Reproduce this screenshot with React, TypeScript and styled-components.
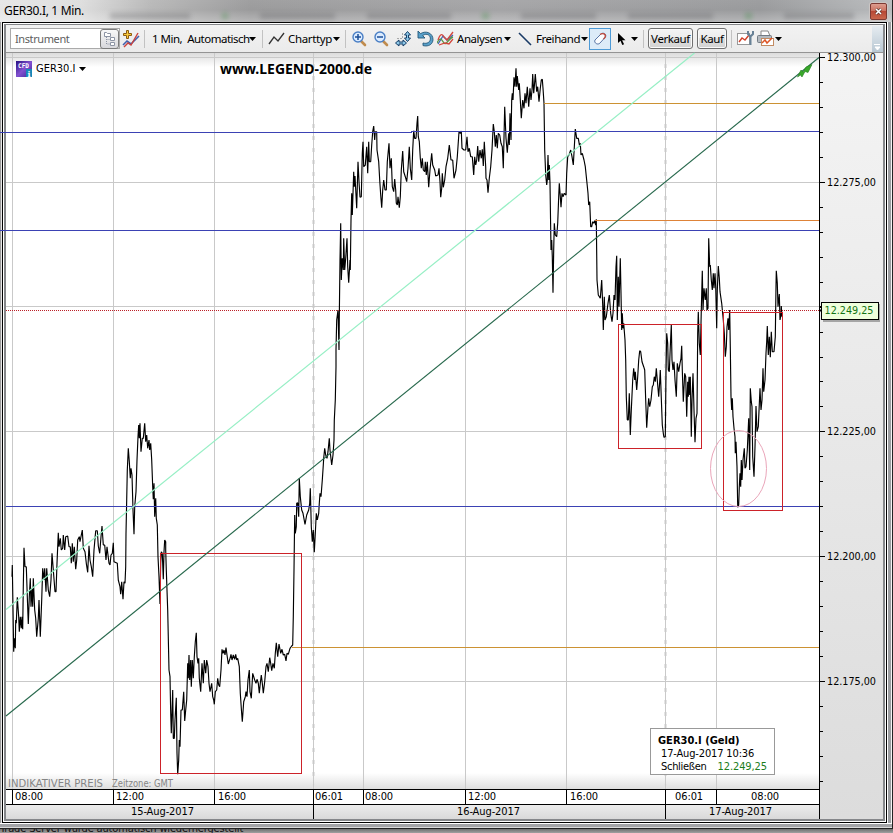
import React from "react";
import styled, { createGlobalStyle } from "styled-components";

const GlobalStyle = createGlobalStyle`
  html, body { margin: 0; padding: 0; overflow: hidden; }
  * { box-sizing: border-box; }
`;

const UI = `"Noto Sans", "Open Sans", sans-serif`;
const TAHOMA = `"DejaVu Sans Condensed", "DejaVu Sans", sans-serif`;

const Desktop = styled.div`
  width: 893px;
  height: 833px;
  overflow: hidden;
  display: flex;
  flex-direction: column;
  background: #a9a9ab;
  font-family: ${UI};
  color: #000;
`;

const WindowShell = styled.div`
  height: 828px;
  flex: none;
  display: flex;
  flex-direction: column;
  border-right: 1px solid #222;
  background: linear-gradient(to right, #9b9b9b 0 1px, #e8e8e8 1px 2px, #fff 2px 888px, #9c9ea1 888px 891px, #f4f4f4 891px);
`;

const TitleBar = styled.header`
  height: 22px;
  flex: none;
  display: flex;
  align-items: center;
  justify-content: space-between;
  padding: 0 5px 0 4px;
  background: linear-gradient(to bottom, rgba(255, 255, 255, 0.05), rgba(255, 255, 255, 0) 45%, rgba(255, 255, 255, 0.28)),
    linear-gradient(to right, #e6e6e6 0, #dedede 80px, #b8b8b8 150px, #9b9b9c 250px, #a4a4a6 500px, #999a9c 760px, #b9bbbd 893px);
`;

const Title = styled.h1`
  margin: 0;
  font: 400 12px/20px ${UI};
  letter-spacing: -0.32px;
  width: 90px;
  white-space: nowrap;
`;

const Reflections = styled.div`
  flex: 1;
  height: 22px;
  display: flex;
  align-items: center;
  justify-content: space-around;
  filter: blur(2.5px);
  opacity: 0.32;
  padding-top: 9px;
`;

const Smudge = styled.i<{ $w: number; $green?: boolean }>`
  width: ${(p) => p.$w}px;
  height: 6px;
  background: ${(p) => (p.$green ? "#2f8a35" : "#5b5b5f")};
`;

const CloseButton = styled.button`
  width: 17px;
  height: 17px;
  padding: 0;
  margin-top: 1px;
  display: flex;
  align-items: center;
  justify-content: center;
  border: 1px solid #7e3a33;
  border-radius: 2px;
  box-shadow: 0 0 0 1px #ccc6c4;
  background: linear-gradient(#dd9d8f, #cb6e5c 48%, #b74835 50%, #c9664c);
`;

const Frame = styled.div`
  width: 885px;
  height: 801px;
  flex: none;
  margin-left: 2px;
  padding: 1px;
  border: 1px solid #000;
  background: #fff;
`;

const InnerFrame = styled.main`
  height: 797px;
  border: 2px solid #85878a;
  border-top-width: 1px;
  display: flex;
  flex-direction: column;
`;

const FrameBottom = styled.div`
  height: 5px;
  flex: none;
  background: linear-gradient(#fff 0 1px, #a3a4a7 1px 4px, #d9d9d9 4px);
`;

const Toolbar = styled.div`
  height: 28px;
  flex: none;
  display: flex;
  align-items: center;
  padding-left: 4px;
  border-bottom: 1px solid #949494;
  background: linear-gradient(#f2f2f2, #ebebeb);
  font: 400 11.5px/20px ${UI};
`;

const Slot = styled.div<{ $gap?: number; $w: number; $ls?: number }>`
  flex: none;
  margin-left: ${(p) => p.$gap ?? 0}px;
  width: ${(p) => p.$w}px;
  height: 21px;
  display: flex;
  align-items: center;
  white-space: nowrap;
  letter-spacing: ${(p) => p.$ls ?? 0}px;
  svg { flex: none; display: block; }
`;

const Separator = styled.div<{ $gap: number }>`
  flex: none;
  width: 1px;
  height: 18px;
  margin-left: ${(p) => p.$gap}px;
  background: #c2c2c2;
`;

const InstrumentField = styled.div`
  width: 110px;
  height: 21px;
  flex: none;
  display: flex;
  justify-content: space-between;
  align-items: center;
  padding-left: 4px;
  border: 1px solid #aaa;
  background: #fff;
  font: 400 11px/18px ${UI};
  letter-spacing: -0.4px;
  color: #606060;
`;

const PickerButton = styled.span`
  width: 19px;
  height: 20px;
  border: 1px solid #7b7b7b;
  border-radius: 3px;
  background: linear-gradient(#f8f8f8, #d8d8dc);
  display: flex;
  align-items: center;
  justify-content: center;
`;

const ActiveTool = styled.div`
  flex: none;
  width: 22px;
  height: 22px;
  margin-left: 1px;
  border: 1px solid #4d9ad6;
  background: #dcebf8;
  display: flex;
  align-items: center;
  justify-content: center;
`;

const OrderButton = styled.button<{ $w: number; $gap: number }>`
  flex: none;
  width: ${(p) => p.$w}px;
  height: 21px;
  margin: 0 0 0 ${(p) => p.$gap}px;
  padding: 0;
  border: 1px solid #707070;
  border-radius: 3px;
  box-shadow: inset 0 0 0 1px #fafafa;
  background: linear-gradient(#f4f4f4, #ececec 48%, #dedede 50%, #d2d2d2);
  font: 400 11.5px/18px ${UI};
  letter-spacing: -0.4px;
  color: #000;
`;

const Overflow = styled.div`
  width: 11px;
  height: 26px;
  margin-left: auto;
  background: linear-gradient(#e6ecf1, #b9c8d3);
  display: flex;
  align-items: flex-end;
  justify-content: center;
`;

const Body = styled.div`
  flex: 1;
  display: flex;
`;

const PlotColumn = styled.div`
  width: 813px;
  display: flex;
  flex-direction: column;
`;

const Plot = styled.div`
  height: 736px;
  position: relative;
  background: linear-gradient(#dcdcdc, #fff 14px, #fff 720px, #dedede 736px);
  svg { display: block; }
`;

const ChartSvg = styled.svg`
  overflow: visible;
`;

const SymbolTag = styled.div`
  position: absolute;
  left: 10px;
  top: 8px;
  height: 16px;
  display: flex;
  align-items: center;
  gap: 4px;
  font: 400 11px/16px ${TAHOMA};
`;

const Tooltip = styled.div`
  position: absolute;
  left: 644px;
  top: 675px;
  width: 125px;
  height: 47px;
  padding: 5px 0 0 7px;
  border: 1px solid #999;
  background: #fff;
  font: 400 11px/13px ${TAHOMA};
  white-space: nowrap;
`;

const TipTitle = styled.div`
  font-weight: 700;
  letter-spacing: 0;
`;

const TipRow = styled.div<{ $ls?: number }>`
  padding-left: 3px;
  display: flex;
  gap: 11px;
  letter-spacing: ${(p) => p.$ls ?? -0.15}px;
`;

const Green = styled.span`
  color: #1c7d1c;
  letter-spacing: -0.1px;
`;

const TimeRow = styled.div`
  height: 15px;
  display: grid;
  grid-template-columns: 6px 101px 101px 99px 50px 102px 101px 99px 51px 103px;
  border-top: 1px solid #000;
  background: #fff;
`;

const TimeCell = styled.div<{ $pad: number }>`
  border-left: 1px solid #000;
  padding-left: ${(p) => p.$pad}px;
  font: 400 11px/14px ${TAHOMA};
  letter-spacing: -0.1px;
  white-space: nowrap;
`;

const DateRow = styled(TimeRow)`
  grid-template-columns: 307px 352px 154px;
  background: linear-gradient(#ececec, #d9d9d9);
`;

const DateCell = styled.div<{ $pad: number; $first?: boolean }>`
  border-left: ${(p) => (p.$first ? 0 : 1)}px solid #000;
  padding-left: ${(p) => p.$pad}px;
  font: 400 11px/14px ${TAHOMA};
  letter-spacing: -0.1px;
`;

const PriceAxis = styled.aside`
  width: 64px;
  border-left: 1px solid #000;
  background: linear-gradient(#f4f4f4, #dcdcdc);
  svg { display: block; overflow: visible; }
`;

const BackgroundWindow = styled.footer`
  height: 5px;
  border-top: 1px solid #222;
  background: linear-gradient(#6f6f6f, #a0a0a0);
  overflow: hidden;
  font: 400 11px/14px ${TAHOMA};
  color: #111;
  white-space: nowrap;
  div { margin-top: -7px; letter-spacing: -0.15px; }
`;

/* Each section holds x,y pairs in thirds of a pixel, measured from its own origin. */
const sections: { origin: [number, number]; data: string }[] = [
  {
    origin: [0, 400],
    data: `36,530 37,495 41,755 43,715 46,745 47,660 49,670 52,592 56,650 58,695 61,650 64,685 66,650 68,688 70,560 72,443 75,500 79,500 82,590 85,672 88,590 91,535 93,620 96,565 98,620 100,535 104,630 107,655 110,710 115,655 117,600 121,710 125,600 128,505 132,540 134,505 138,575 140,505 145,570 149,590 153,540 156,460 160,510 165,575 168,575 171,490 175,398 177,440 181,415 184,450 188,445 190,405 194,450 197,410 203,408 207,440 211,440 214,490 217,430 220,485 223,440 227,508 230,480 233,420 238,410 240,425 247,390 250,445 255,455 259,490 263,517 267,437 270,480 274,500 278,530 282,450 287,392 292,392 295,438 299,460 303,410 306,378 310,435 314,435 318,480 321,440 327,490 330,495 333,465 337,460 340,428 342,485 352,490 355,540 360,560 362,583 365,545 369,598 372,545 375,550 377,500 378,400 380,300 382,210 385,145 388,185 391,235 393,205 396,225 399,330 402,403 404,320 408,275 411,180 414,110 416,75 418,115 420,70 423,155 427,115 430,115 434,70 437,125 440,105 443,145 447,120 449,150 452,130 455,180 458,260 460,298 462,250 464,350 467,295 469,355 472,375 474,470 477,530 480,612 482,490 484,455 487,460 490,538 492,455 494,420 497,425`,
  },
  {
    origin: [120, 520],
    data: `137,90 139,150 143,270 147,450 150,470 152,580 154,640 158,510 160,655 163,655 165,600 169,533 171,700 173,763 176,720 178,660 180,680 183,570 187,570 191,515 194,603 197,570 200,540 203,430 205,475 207,405 209,480 212,420 214,500 217,420 220,475 223,410 226,365 229,338 231,410 234,430 236,415 238,475 242,515 246,430 250,490 253,420 257,460 260,420 264,440 267,490 270,515 275,490 278,530 281,540 283,553 286,515 290,510 293,475 296,495 299,500 303,450 306,388 309,400 312,390 315,405 318,383 321,405 325,432 330,415 333,403 336,420 340,405 344,418 347,403 350,420 353,415 358,440 361,520 364,565 367,605 371,545 376,530 378,515 381,530 384,480 388,450 390,515 394,535 398,460 404,480 408,490 411,478 415,490 418,520 421,490 424,465 427,490 430,520 434,485 438,440 441,430 445,455 449,413 452,430 455,452 459,430 463,445 466,400 469,368 473,410 477,372 482,400 486,388 490,405 494,403 498,423 501,400 505,403 510,385 515,378 518,375 520,290 522,150`,
  },
  {
    origin: [280, 340],
    data: `44,525 46,580 49,560 50,490 53,488 56,530 58,415 61,470 65,510 69,520 75,553 80,525 86,510 89,490 91,445 94,560 97,605 100,570 103,637 106,580 109,520 112,540 116,520 118,490 120,460 123,470 127,420 130,375 131,355 134,325 137,345 141,355 144,335 148,295 150,330 155,375 159,345 162,300 163,240 166,180 168,80`,
  },
  {
    origin: [280, 100],
    data: `168,750 170,660 174,630 177,750 178,650 180,480 182,370 184,540 187,475 190,510 191,415 194,510 197,475 201,415 203,500 206,548 210,480 211,510 213,360 215,280 217,345 221,215 223,260 225,228 230,325 234,185 237,245 240,292 244,290 247,160 249,125 251,200 256,195 260,140 263,220 266,125 268,185 272,185 275,135 278,95 281,78 284,120 286,95 290,95 291,150 296,185 299,240 302,285 305,323 308,270 311,240 315,270 319,270 322,185 327,130 330,205 334,175 337,260 341,275 344,237 347,270 349,310 352,315 354,290 358,323 361,290 364,210 368,153 371,215 376,230 380,245 384,205 388,140 391,205 395,240 398,150 401,92 404,115 408,115 411,70 413,48 415,110 418,125 421,175 424,205 427,175 430,210 434,215 436,185 439,225 442,185 446,262 450,210 455,160 458,195 464,210 467,228 474,225 477,205 480,245 482,292 485,265 487,220 490,262 494,240 498,200 503,175 508,135 513,180 518,180 522,235 528,210 532,170 537,95 541,100 544,93 546,145 552,150`,
  },
  {
    origin: [440, 50],
    data: `77,300 81,260 84,305 88,295 92,320 97,320 101,375 104,320 107,345 110,330 113,288 116,335 120,300 124,325 127,298 130,348 133,275 137,350 138,385 141,390 144,428 148,385 152,350 156,300 160,222 163,245 166,290 169,255 172,295 175,250 179,255 183,280 187,290 190,355 194,170 198,265 202,308 206,250 208,285 210,190 213,270 215,150 217,130 219,150 222,82 225,110 228,55 230,110 232,78 236,120 238,100 241,150 244,205 248,150 252,175 255,130 258,160 262,110 266,170 270,115 273,150 276,120 278,72 281,130 283,110 286,72 290,125 293,110 297,155 301,115 304,90 307,88 309,115 312,160 314,300 317,375 320,405 322,390 324,315 326,390 328,345 330,400 332,540 333,600 335,570 337,620 339,728 341,600 343,520 346,555 350,560 353,520 356,440 358,400 361,440 363,472 366,430 369,440 373,430 378,435 380,370 383,320 387,315 392,300 396,320 400,345 404,270 406,237 410,265 415,265 419,290 421,280 423,315 427,310 432,330 436,350 441,400 444,430 446,465 449,455 452,530 455,530 458,515 461,520 464,512 467,525 469,508 471,690 475,735 481,745 485,690 488,765 490,840 493,740 495,810 499,800 504,760 508,735 512,790 516,815 519,790 522,735 525,750 528,650 530,617 532,810 535,680 537,770 541,625 543,730 545,840 547,790 549,835 551,820`,
  },
  {
    origin: [580, 200],
    data: `135,420 137,480 139,590 142,660 145,660 148,580 151,705 154,630 158,540 161,505 164,540 166,515 170,570 173,530 176,480 179,452 182,455 186,485 191,500 194,510 197,600 200,683 204,620 206,595 209,620 213,600 217,560 220,555 223,530 226,545 229,505 233,555 236,590 239,545 241,510 244,595 247,675 250,700 252,712 256,710 258,520 260,400 263,430 265,510 268,515 271,440 274,375 276,480 279,510 282,485 285,540 289,590 292,490 296,515 300,490 303,475 305,437 307,510 310,605 314,520 317,530 320,650 323,545 325,590 327,530 329,585 331,530 334,710 336,600 339,520 342,630 345,727 348,655 351,640 353,400 355,335 358,430 361,465 364,330 367,212 369,330 372,265 376,300 379,265 381,330 384,325 386,115 389,200 391,195 394,240 397,270 400,220 402,265 405,220 407,260 410,385 412,270 415,198 418,235 420,275 425,310`,
  },
  {
    origin: [680, 220],
    data: `130,300 133,340 136,410 139,380 141,320 144,295 146,330 149,270 151,380 153,530 155,570 157,535 159,590 162,625 165,650 166,700 168,665 171,740 173,862 176,855 178,800 180,760 182,800 184,720 186,780 189,720 193,685 195,745 198,740 202,690 206,595 209,750 211,505 214,545 216,560 218,710 222,770 225,680 228,558 231,635 235,620 240,505 243,570 246,540 249,445 251,515 255,480 258,400 260,365 262,318 265,405 268,350 271,412 274,335 277,395 282,395 286,350 288,200 289,152 292,190 294,260 298,222 300,300 303,285 304,258 306,290`,
  },
];

const pricePoints = sections
  .flatMap(({ origin, data }) =>
    data.split(/\s+/).map((pair) => {
      const [x, y] = pair.split(",").map(Number);
      return `${(origin[0] + x / 3).toFixed(1)},${(origin[1] + y / 3).toFixed(1)}`;
    })
  )
  .join(" ");

const gridX = [12, 113, 214, 313, 363, 465, 566, 665, 716];
const gridY = [57, 182, 306, 431, 556, 681];

const Caret = () => (
  <svg width="7" height="4" viewBox="0 0 7 4">
    <path d="M0 0h7L3.5 4z" fill="#000" />
  </svg>
);

const PlusChartIcon = () => (
  <svg width="18" height="18" viewBox="0 0 18 18" fill="none">
    <path d="M1 15l4-4 4 3 8-8" stroke="#4260ad" strokeWidth="1.6" />
    <path d="M2 17l4-4 3 2 7-12" stroke="#c9413d" strokeWidth="1.4" />
    <path d="M4.500 .5h2v3h3v2h-3v3h-2v-3h-3v-2h3z" fill="#f8c93c" stroke="#8c5a10" />
  </svg>
);

const LineTypeIcon = () => (
  <svg width="17" height="16" viewBox="0 0 17 16" fill="none">
    <path d="M1 13l5-7 4 4 6-8" stroke="#333" strokeWidth="1.3" />
  </svg>
);

const MagnifierIcon = ({ plus = false }: { plus?: boolean }) => (
  <svg width="15" height="16" viewBox="0 0 15 16" fill="none">
    <path d="M9 10l4 4" stroke="#c08c4e" strokeWidth="2.6" strokeLinecap="round" />
    <circle cx="6" cy="6" r="5" fill="#dcecff" stroke="#4a7fc5" strokeWidth="1.4" />
    <path d={plus ? "M3 6h6M6 3v6" : "M3 6h6"} stroke="#1d4f98" strokeWidth="1.5" />
  </svg>
);

const FitIcon = () => (
  <svg width="17" height="16" viewBox="0 0 17 16">
    <path d="M7.500 2v5.500H1" fill="none" stroke="#aaa" strokeDasharray="2 1" />
    <path d="M12.500 .5l3 3.500h-2v3h2l-3 3.500-3-3.500h2V4h-2z" fill="#8ec8e8" stroke="#153f68" />
    <path d="M.5 12l3.500-3v2h4V9l3.500 3-3.500 3v-2H4v2z" fill="#8ec8e8" stroke="#153f68" />
  </svg>
);

const UndoIcon = () => (
  <svg width="17" height="17" viewBox="0 0 17 17">
    <path d="M1 1v7h7L5.600 5.600C10 2.500 14 5.500 13.300 9.500c-.5 3-3.500 4.500-7.300 3.500v2.600c6 1.400 9.800-1.600 10-6C16 3 9 .2 3.600 3.600z" fill="#58a0ca" stroke="#255878" strokeWidth=".9" />
  </svg>
);

const AnalysisIcon = () => (
  <svg width="17" height="16" viewBox="0 0 17 16" fill="none" strokeWidth="1.3">
    <path d="M1 13l5-8 4 4 6-5" stroke="#3f62b4" />
    <path d="M0 12c3-7 5-3 7 0s5-5 9-6" stroke="#579947" />
    <path d="M1 9c2-6 4-7 6-3l3 3 6-8M2 14l6-2 4 1 4-5" stroke="#d4473d" />
  </svg>
);

const FreehandIcon = () => (
  <svg width="14" height="16" viewBox="0 0 14 16">
    <path d="M1 2l12 12" stroke="#193a66" strokeWidth="1.6" />
  </svg>
);

const EraserIcon = () => (
  <svg width="14" height="14" viewBox="0 0 14 14">
    <path d="M2 8l6-6c2-2 6 0 4.500 3L7 11c-2 2.500-6.500 0-5-3z" fill="#fafcff" stroke="#5875a5" />
    <path d="M7 2.500C9.500.5 13.500 2 12 5.500L10.500 7" fill="none" stroke="#c04b3e" strokeWidth="1.3" />
  </svg>
);

const PointerIcon = () => (
  <svg width="9" height="14" viewBox="0 0 9 14">
    <path d="M1 1v10l2.500-2.300L5.300 13l1.800-.8-2-4H8.500z" fill="#000" />
  </svg>
);

const ChartSetupIcon = () => (
  <svg width="17" height="17" viewBox="0 0 17 17" fill="none">
    <rect x=".5" y="3.500" width="12" height="11" fill="#fff" stroke="#999" />
    <path d="M2 12l3-4 3 2 4-5" stroke="#d3422a" strokeWidth="1.4" />
    <path d="M13.500 6v9M11 1v3l2 2h1l2-2V1" stroke="#688196" strokeWidth="2" />
  </svg>
);

const PrintIcon = () => (
  <svg width="17" height="17" viewBox="0 0 17 17" fill="none">
    <path d="M4 6V1h7l2 5" fill="#fff" stroke="#888" />
    <rect x=".5" y="5.500" width="14" height="7" rx="1" fill="#b4bac0" stroke="#737b83" />
    <rect x="4.500" y="8.500" width="12" height="7" fill="#fff" stroke="#c28b62" />
    <path d="M5 13l3-3 2 3 5-5" stroke="#de5525" strokeWidth="1.500" />
  </svg>
);

const CfdBadge = () => (
  <svg width="16" height="16" viewBox="0 0 16 16">
    <defs>
      <linearGradient id="cfd" x1="0" y1="0" x2="1" y2="1">
        <stop offset="0" stopColor="#271081" />
        <stop offset=".5" stopColor="#8251d0" />
        <stop offset="1" stopColor="#3c2398" />
      </linearGradient>
    </defs>
    <rect width="16" height="16" fill="url(#cfd)" />
    <text x="2" y="7" fontFamily="DejaVu Sans Mono, monospace" fontWeight="700" fontSize="6.500" fill="#fff" textLength="11" lengthAdjust="spacingAndGlyphs">CFD</text>
    <rect x="10" y="8" width="6" height="8" fill="#1788b8" />
    <text x="11.500" y="15.500" fontFamily="DejaVu Serif, serif" fontWeight="700" fontSize="8" fill="#fff">i</text>
  </svg>
);

const Chart = () => (
  <ChartSvg width="813" height="736" viewBox="6 53 813 736">
    <g stroke="#c9c9c9" shapeRendering="crispEdges">
      <path d="M313.500 64V789M665.500 64V789" stroke="#e4e4e4" strokeWidth="3" strokeDasharray="4 8" />
      {gridX.map((x) => <path key={x} d={`M${x + 0.5} 53V789`} />)}
      {gridY.map((y) => <path key={y} d={`M6 ${y + 0.5}H819`} />)}
    </g>
    <text x="8" y="787" fontFamily={TAHOMA} fontSize="10" fill="#858585" textLength="95" lengthAdjust="spacingAndGlyphs">INDIKATIVER PREIS</text>
    <text x="112" y="787" fontFamily={TAHOMA} fontSize="10" fill="#858585" textLength="61" lengthAdjust="spacingAndGlyphs">Zeitzone: GMT</text>
    <text x="220" y="74" fontFamily={UI} fontSize="13.500" fontWeight="700" textLength="152" lengthAdjust="spacingAndGlyphs">www.LEGEND-2000.de</text>
    <polyline points={pricePoints} fill="none" stroke="#000" strokeWidth="1.150" strokeLinejoin="bevel" />
    <g fill="none" shapeRendering="crispEdges">
      <path d="M0 132.500H412M411 131.500H819M0 230.500H819M6 506.500H819" stroke="#3b42b4" />
      <path d="M544 103.500H819M292 647.500H819" stroke="#cc9233" />
      <path d="M595 220.500H819" stroke="#de8338" />
      <path d="M6 310.500H819" stroke="#bb2028" strokeDasharray="1 1" />
      <path d="M160.500 553.500H301.500V773.500H160.500zM618.500 324.500H701.500V448.500H618.500zM723.500 312.500H782.500V510.500H723.500z" stroke="#cc2229" />
    </g>
    <path d="M6 609.500L694.500 53" stroke="#97efc5" strokeWidth="1.200" />
    <path d="M6 716L819 57.500" stroke="#28694d" strokeWidth="1.100" />
    <ellipse cx="738.500" cy="468.500" rx="28" ry="38" fill="none" stroke="#eaa6ba" />
    <path d="M797.500 77l3.500-7 2 2 3-5 6-2.500-4 8-3-1-3 5.500-1.500-2z" fill="#39a829" stroke="#247d20" strokeWidth=".6" />
  </ChartSvg>
);

const minorTicks = Array.from({ length: 30 }, (_, i) => Math.round(57 + i * 24.960)).filter((y) => y < 789);
const priceLabels = ["12.300,00", "12.275,00", "", "12.225,00", "12.200,00", "12.175,00"];

const PriceScale = () => (
  <svg width="63" height="766" viewBox="820 53 63 766" fontFamily={TAHOMA} fontSize="11">
    <g stroke="#000" shapeRendering="crispEdges">
      {minorTicks.map((y) => <path key={y} d={`M820 ${y + 0.5}h3`} />)}
      {gridY.map((y) => <path key={y} d={`M820 ${y + 0.5}h5`} />)}
    </g>
    {priceLabels.map((label, i) =>
      label ? <text key={label} x="827" y={gridY[i] + 4} textLength="49" lengthAdjust="spacingAndGlyphs">{label}</text> : null
    )}
    <rect x="823" y="304" width="57" height="18" fill="#777" opacity=".6" />
    <rect x="821.500" y="302.500" width="57" height="17" fill="#efffdc" stroke="#000" />
    <path d="M819 310.500l3-2v4z" fill="#000" />
    <text x="824.500" y="314" fill="#147414" textLength="49" lengthAdjust="spacingAndGlyphs">12.249,25</text>
  </svg>
);

const times: [string, number][] = [
  ["", 0], ["08:00", 2], ["12:00", 2], ["16:00", 3], ["06:01", 1], ["08:00", 1], ["12:00", 2], ["16:00", 3], ["06:01", 9], ["08:00", 34],
];

export default function App() {
  return (
    <Desktop>
      <GlobalStyle />
      <WindowShell>
        <TitleBar>
          <Title>GER30.I, 1 Min.</Title>
          <Reflections>
            <Smudge $w={80} /><Smudge $w={6} $green /><Smudge $w={75} />
            <Smudge $w={84} /><Smudge $w={7} $green /><Smudge $w={75} />
            <Smudge $w={85} /><Smudge $w={7} $green /><Smudge $w={70} />
          </Reflections>
          <CloseButton aria-label="Schließen">
            <svg width="7" height="7" viewBox="0 0 7 7">
              <path d="M1 1l5 5M6 1L1 6" stroke="#52352f" strokeWidth="2.800" />
              <path d="M1 1l5 5M6 1L1 6" stroke="#fff" strokeWidth="1.600" />
            </svg>
          </CloseButton>
        </TitleBar>
        <Frame>
          <InnerFrame>
            <Toolbar>
              <InstrumentField>
                Instrument
                <PickerButton>
                  <svg width="13" height="15" viewBox="0 0 13 15" fill="#fff" stroke="#8d94a4">
                    <path d="M1.500 1.500h2l1 1h3v3h-6zM7.500 6.500h4v3h-4zM7.500 11.500h4v3h-4z" />
                    <path d="M3.500 6v7H7M3.500 8.500H7" fill="none" strokeDasharray="1 1" />
                  </svg>
                </PickerButton>
              </InstrumentField>
              <Slot $gap={2} $w={18}><PlusChartIcon /></Slot>
              <Separator $gap={4} />
              <Slot $gap={7} $w={97} $ls={-0.5}>1 Min,&nbsp; Automatisch</Slot>
              <Slot $w={7}><Caret /></Slot>
              <Separator $gap={6} />
              <Slot $gap={5} $w={17}><LineTypeIcon /></Slot>
              <Slot $gap={3} $w={45} $ls={-0.35}>Charttyp</Slot>
              <Slot $w={7}><Caret /></Slot>
              <Separator $gap={5} />
              <Slot $gap={6} $w={15}><MagnifierIcon plus /></Slot>
              <Slot $gap={7} $w={15}><MagnifierIcon /></Slot>
              <Slot $gap={6} $w={17}><FitIcon /></Slot>
              <Slot $gap={5} $w={17}><UndoIcon /></Slot>
              <Slot $gap={3} $w={17}><AnalysisIcon /></Slot>
              <Slot $gap={3} $w={47} $ls={-0.45}>Analysen</Slot>
              <Slot $w={7}><Caret /></Slot>
              <Slot $gap={7} $w={14}><FreehandIcon /></Slot>
              <Slot $gap={4} $w={45} $ls={-0.45}>Freihand</Slot>
              <Slot $w={7}><Caret /></Slot>
              <ActiveTool><EraserIcon /></ActiveTool>
              <Slot $gap={6} $w={9}><PointerIcon /></Slot>
              <Slot $gap={5} $w={7}><Caret /></Slot>
              <Separator $gap={5} />
              <OrderButton $gap={4} $w={45}>Verkauf</OrderButton>
              <OrderButton $gap={4} $w={30}>Kauf</OrderButton>
              <Separator $gap={4} />
              <Slot $gap={5} $w={17}><ChartSetupIcon /></Slot>
              <Slot $gap={3} $w={17}><PrintIcon /></Slot>
              <Slot $gap={1} $w={7}><Caret /></Slot>
              <Overflow>
                <svg width="7" height="8" viewBox="0 0 7 8">
                  <path d="M0 .5h6M1 3h5L3.500 6z" fill="#fff" stroke="#fff" />
                </svg>
              </Overflow>
            </Toolbar>
            <Body>
              <PlotColumn>
                <Plot>
                  <Chart />
                  <SymbolTag><CfdBadge /><span>GER30.I</span><Caret /></SymbolTag>
                  <Tooltip>
                    <TipTitle>GER30.I (Geld)</TipTitle>
                    <TipRow>17-Aug-2017 10:36</TipRow>
                    <TipRow $ls={-0.3}><span>Schließen</span><Green>12.249,25</Green></TipRow>
                  </Tooltip>
                </Plot>
                <TimeRow>
                  {times.map(([label, pad], i) =>
                    label ? <TimeCell key={i} $pad={pad}>{label}</TimeCell> : <div key={i} />
                  )}
                </TimeRow>
                <DateRow>
                  <DateCell $first $pad={125}>15-Aug-2017</DateCell>
                  <DateCell $pad={143}>16-Aug-2017</DateCell>
                  <DateCell $pad={43}>17-Aug-2017</DateCell>
                </DateRow>
              </PlotColumn>
              <PriceAxis><PriceScale /></PriceAxis>
            </Body>
          </InnerFrame>
        </Frame>
        <FrameBottom />
      </WindowShell>
      <BackgroundWindow><div>Trade Server wurde automatisch wiederhergestellt</div></BackgroundWindow>
    </Desktop>
  );
}
